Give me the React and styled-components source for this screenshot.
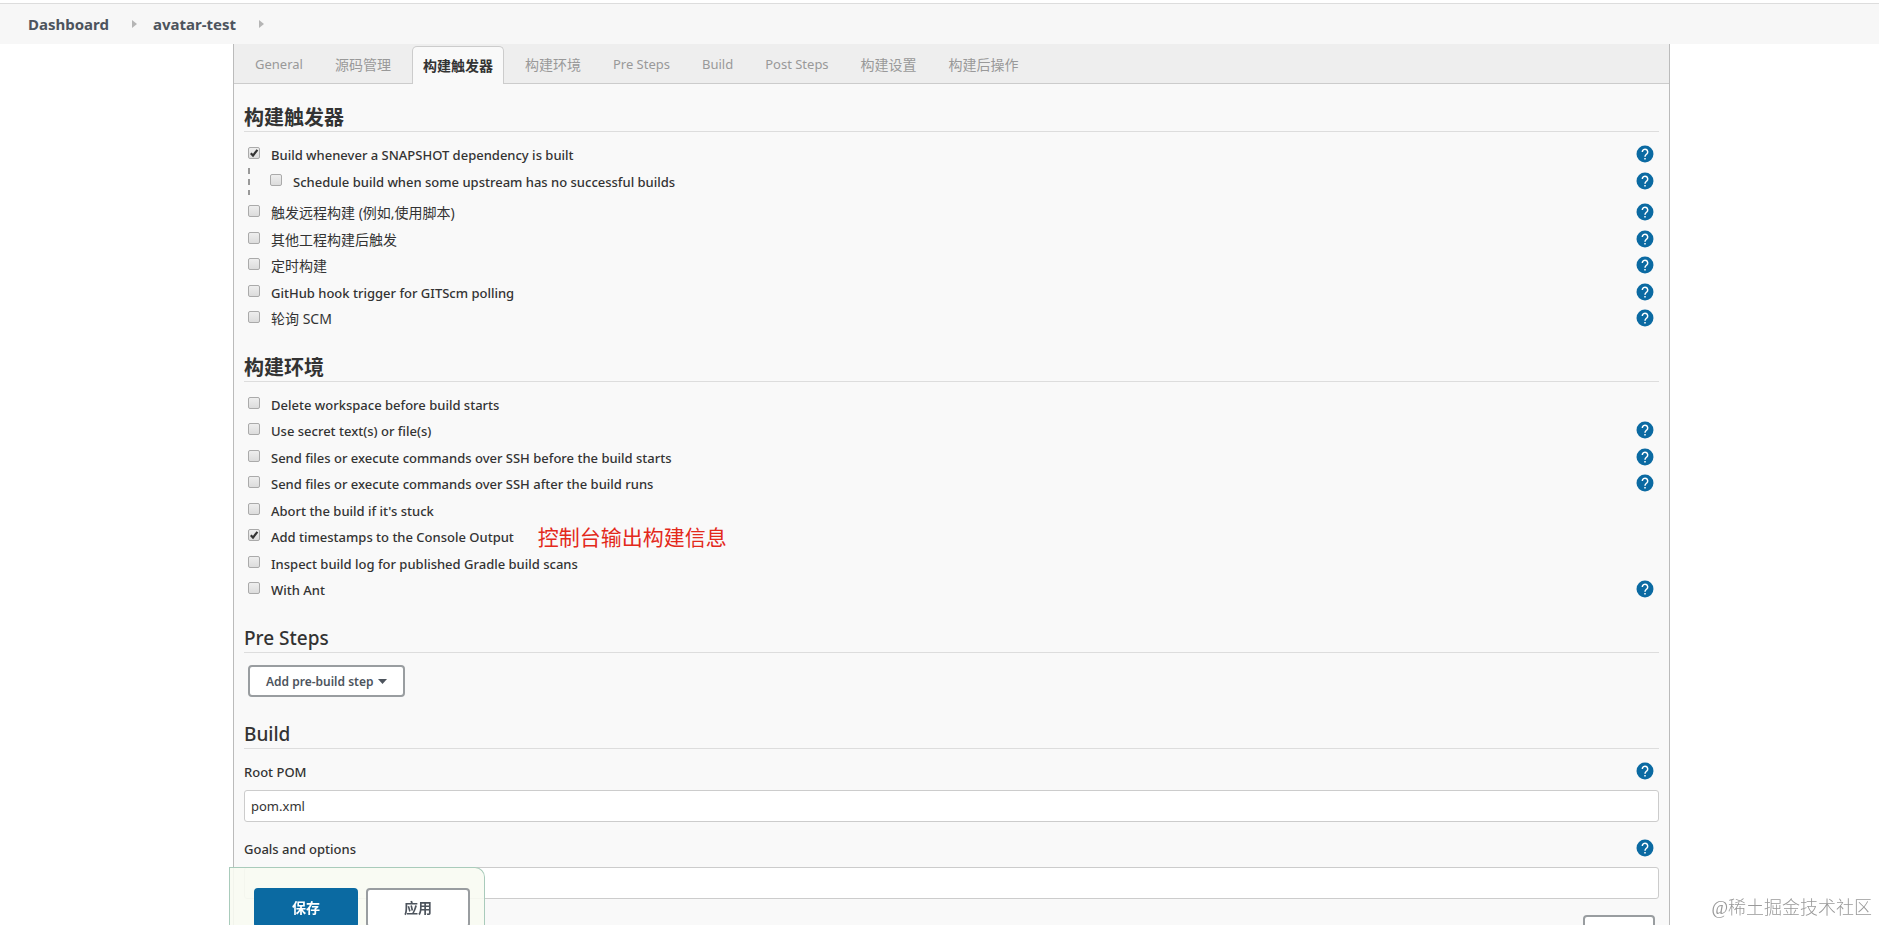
import React, { useState } from 'react';
import styled, { createGlobalStyle } from 'styled-components';

const GlobalStyle = createGlobalStyle`
  *, *::before, *::after {
    box-sizing: border-box;
  }

  body {
    margin: 0;
    background: #fff;
    color: #333;
    font-family: "Noto Sans", "Noto Sans CJK SC", sans-serif;
    font-size: 14px;
    line-height: 20px;
  }

  button, input {
    font-family: inherit;
  }
`;

const Page = styled.div`
  height: 100vh;
  overflow: hidden;
  padding-top: 3px;
`;

const Breadcrumbs = styled.nav`
  display: flex;
  align-items: center;
  gap: 16px;
  height: 41px;
  padding: 0 28px;
  border-top: 1px solid #ddd;
  background: #f7f7f7;

  a {
    color: #4d545d;
    font-size: 15px;
    font-weight: 700;
    text-decoration: none;
  }

  svg {
    display: block;
    margin-left: 7px;
  }
`;

const Panel = styled.main`
  margin: 0 209px 0 233px;
  border: 1px solid #bbb;
  border-width: 0 1px;
  background: #f9f9f9;
`;

const TabBar = styled.div`
  display: flex;
  align-items: flex-end;
  gap: 10px;
  height: 40px;
  padding: 0 10px;
  border-bottom: 1px solid #ccc;
  background: #eee;
`;

const Tab = styled.button`
  height: ${props => props.$active ? '38px' : '37px'};
  margin-bottom: ${props => props.$active ? '-1px' : '0'};
  padding: 0 10px 2px;
  border: 1px solid ${props => props.$active ? '#ccc' : 'transparent'};
  border-bottom: 0;
  border-radius: 5px 5px 0 0;
  background: ${props => props.$active ? '#f9f9f9' : 'transparent'};
  color: ${props => props.$active ? '#333' : '#999'};
  font-size: ${props => props.$latin ? '13px' : '14px'};
  font-weight: ${props => props.$active ? 700 : 400};
  white-space: nowrap;
  cursor: pointer;
`;

const Form = styled.form`
  padding: 0 10px;
`;

const SectionTitle = styled.h2`
  margin: 0;
  padding: ${props => props.$latin ? '19px 0 0' : '21px 0 0'};
  border-bottom: 1px solid #ddd;
  font-size: ${props => props.$latin ? '19px' : '20px'};
  font-weight: ${props => props.$latin ? 500 : 700};
  line-height: ${props => props.$latin ? '28px' : '26px'};
`;

const OptionList = styled.ul`
  margin: 0;
  padding: 9px 0 2px;
  list-style: none;
`;

const OptionItem = styled.li`
  &:nth-child(even) > div {
    height: 26px;
  }
`;

const OptionRow = styled.div`
  display: flex;
  align-items: center;
  height: 27px;
  padding: 0 5px 0 4px;
`;

const NestedRow = styled(OptionRow)`
  height: 27px;
  margin: 0 0 5px 4px;
  padding: 0 5px 0 22px;
  background: repeating-linear-gradient(#999 0 6px, transparent 6px 11px) left top / 2px 100% no-repeat;
`;

const OptionLabel = styled.label`
  display: flex;
  align-items: center;
  gap: 11px;
  font-size: ${props => props.$latin ? '13px' : '14px'};
  font-weight: ${props => props.$latin ? 550 : 400};
`;

const Checkbox = styled.input`
  appearance: none;
  width: 12px;
  height: 12px;
  margin: 0 0 4px;
  border: 1px solid #aaa;
  border-radius: 2px;
  background: linear-gradient(#eee, #dcdcdc);

  &:checked {
    background:
      url("data:image/svg+xml,%3Csvg xmlns='http://www.w3.org/2000/svg' viewBox='0 0 10 10'%3E%3Cpath d='M1.8 5.2 4 7.6 8.4 1.8' fill='none' stroke='%23333' stroke-width='2.2'/%3E%3C/svg%3E") center / 10px 10px no-repeat,
      linear-gradient(#eee, #dcdcdc);
  }
`;

const Note = styled.span`
  margin-left: 24px;
  color: #e3291b;
  font-size: 21px;
  line-height: 26px;
`;

const HelpButton = styled.button`
  display: flex;
  margin: 0 0 2px auto;
  padding: 0;
  border: 0;
  background: none;
  cursor: pointer;
`;

const OutlineButton = styled.button`
  display: flex;
  align-items: center;
  justify-content: center;
  gap: 5px;
  min-width: 72px;
  height: 32px;
  padding: 0 16px;
  border: 2px solid #999da0;
  border-radius: 4px;
  background: #fff;
  color: #4d545d;
  font-size: 12px;
  font-weight: 600;
`;

const StepActions = styled.div`
  padding: 12px 4px 4px;
`;

const FieldHeader = styled.div`
  display: flex;
  align-items: center;
  height: 41px;
  padding: 5px 5px 0 0;
  font-size: 13px;
  font-weight: 550;
`;

const TextInput = styled.input`
  display: block;
  width: 100%;
  height: 32px;
  margin-bottom: 4px;
  padding: 0 6px;
  border: 1px solid #ccc;
  border-radius: 3px;
  background: #fff;
  color: #333;
  font-size: 13px;
`;

const AdvancedRow = styled.div`
  display: flex;
  justify-content: flex-end;
  padding: 12px 4px;
`;

const SaveBar = styled.div`
  position: fixed;
  bottom: 0;
  left: 229px;
  display: flex;
  gap: 8px;
  height: 58px;
  padding: 20px 14px 0 24px;
  border: 1px solid #a9cbbb;
  border-bottom: 0;
  border-radius: 0 10px 0 0;
  background: rgba(248, 251, 242, 0.9);
`;

const BarButton = styled.button`
  width: 104px;
  height: 40px;
  padding: 0 0 2px;
  border: 2px solid ${props => props.$primary ? '#0b6aa2' : '#999da0'};
  border-radius: 4px;
  background: ${props => props.$primary ? '#0b6aa2' : '#fff'};
  color: ${props => props.$primary ? '#fff' : '#4d545d'};
  font-size: 14px;
  font-weight: 700;
`;

const Watermark = styled.div`
  position: fixed;
  right: 7px;
  bottom: 4px;
  color: #999;
  font-family: "Liberation Serif", "Noto Sans CJK SC", serif;
  font-size: 18px;
  font-weight: 300;
  line-height: 26px;
`;

const tabs = ['General', '源码管理', '构建触发器', '构建环境', 'Pre Steps', 'Build', 'Post Steps', '构建设置', '构建后操作'];

const triggers = [
  {
    id: 'snapshot',
    label: 'Build whenever a SNAPSHOT dependency is built',
    checked: true,
    help: true,
    child: { id: 'upstream', label: 'Schedule build when some upstream has no successful builds', help: true },
  },
  { id: 'remote', label: '触发远程构建 (例如,使用脚本)', help: true },
  { id: 'after', label: '其他工程构建后触发', help: true },
  { id: 'timer', label: '定时构建', help: true },
  { id: 'github', label: 'GitHub hook trigger for GITScm polling', help: true },
  { id: 'scm', label: '轮询 SCM', help: true },
];

const environment = [
  { id: 'clean', label: 'Delete workspace before build starts' },
  { id: 'secret', label: 'Use secret text(s) or file(s)', help: true },
  { id: 'ssh-before', label: 'Send files or execute commands over SSH before the build starts', help: true },
  { id: 'ssh-after', label: 'Send files or execute commands over SSH after the build runs', help: true },
  { id: 'abort', label: "Abort the build if it's stuck" },
  { id: 'timestamps', label: 'Add timestamps to the Console Output', checked: true, note: '控制台输出构建信息' },
  { id: 'gradle', label: 'Inspect build log for published Gradle build scans' },
  { id: 'ant', label: 'With Ant', help: true },
];

// Latin glyphs look larger than Chinese ones at the same size
const isLatin = text => /^[\x20-\x7e]+$/.test(text);

const Arrow = () => (
  <svg width="5" height="8" viewBox="0 0 5 8" aria-hidden="true">
    <path d="M0 0 5 4 0 8z" fill="#b5b5b5" />
  </svg>
);

const Help = ({ topic }) => (
  <HelpButton type="button" aria-label={`Help for ${topic}`}>
    <svg width="18" height="18" viewBox="0 0 24 24" aria-hidden="true">
      <circle cx="12" cy="12" r="11.3" fill="#0b6aa2" />
      <path d="M8.4 9.2a3.6 3.6 0 1 1 5.9 2.8c-1.4 1.2-2.3 1.7-2.3 3.6" fill="none" stroke="#fff" strokeWidth="2" />
      <path d="M11 17.2h2v2.2h-2z" fill="#fff" />
    </svg>
  </HelpButton>
);

const Option = ({ option, row: Row = OptionRow }) => (
  <Row>
    <OptionLabel htmlFor={option.id} $latin={isLatin(option.label)}>
      <Checkbox type="checkbox" id={option.id} defaultChecked={option.checked} />
      {option.label}
    </OptionLabel>
    {option.note && <Note>{option.note}</Note>}
    {option.help && <Help topic={option.label} />}
  </Row>
);

const Options = ({ items }) => (
  <OptionList>
    {items.map(item => (
      <OptionItem key={item.id}>
        <Option option={item} />
        {item.child && <Option option={item.child} row={NestedRow} />}
      </OptionItem>
    ))}
  </OptionList>
);

const App = () => {
  const [activeTab, setActiveTab] = useState('构建触发器');

  return (
    <Page>
      <GlobalStyle />
      <Breadcrumbs>
        <a href="#dashboard">Dashboard</a>
        <Arrow />
        <a href="#avatar-test">avatar-test</a>
        <Arrow />
      </Breadcrumbs>

      <Panel>
        <TabBar>
          {tabs.map(tab => (
            <Tab
              key={tab}
              type="button"
              $latin={isLatin(tab)}
              $active={tab === activeTab}
              onClick={() => setActiveTab(tab)}
            >
              {tab}
            </Tab>
          ))}
        </TabBar>

        <Form>
          <SectionTitle>构建触发器</SectionTitle>
          <Options items={triggers} />

          <SectionTitle>构建环境</SectionTitle>
          <Options items={environment} />

          <SectionTitle $latin>Pre Steps</SectionTitle>
          <StepActions>
            <OutlineButton type="button">
              Add pre-build step
              <svg width="9" height="5" viewBox="0 0 9 5" aria-hidden="true">
                <path d="M0 0h9L4.5 5z" fill="#4d545d" />
              </svg>
            </OutlineButton>
          </StepActions>

          <SectionTitle $latin>Build</SectionTitle>
          <FieldHeader>
            <label htmlFor="root-pom">Root POM</label>
            <Help topic="Root POM" />
          </FieldHeader>
          <TextInput id="root-pom" type="text" defaultValue="pom.xml" />
          <FieldHeader>
            <label htmlFor="goals">Goals and options</label>
            <Help topic="Goals and options" />
          </FieldHeader>
          <TextInput id="goals" type="text" />
          <AdvancedRow>
            <OutlineButton type="button" aria-label="Advanced" />
          </AdvancedRow>
        </Form>
      </Panel>

      <SaveBar>
        <BarButton type="button" $primary>保存</BarButton>
        <BarButton type="button">应用</BarButton>
      </SaveBar>
      <Watermark>@稀土掘金技术社区</Watermark>
    </Page>
  );
};

export default App;
